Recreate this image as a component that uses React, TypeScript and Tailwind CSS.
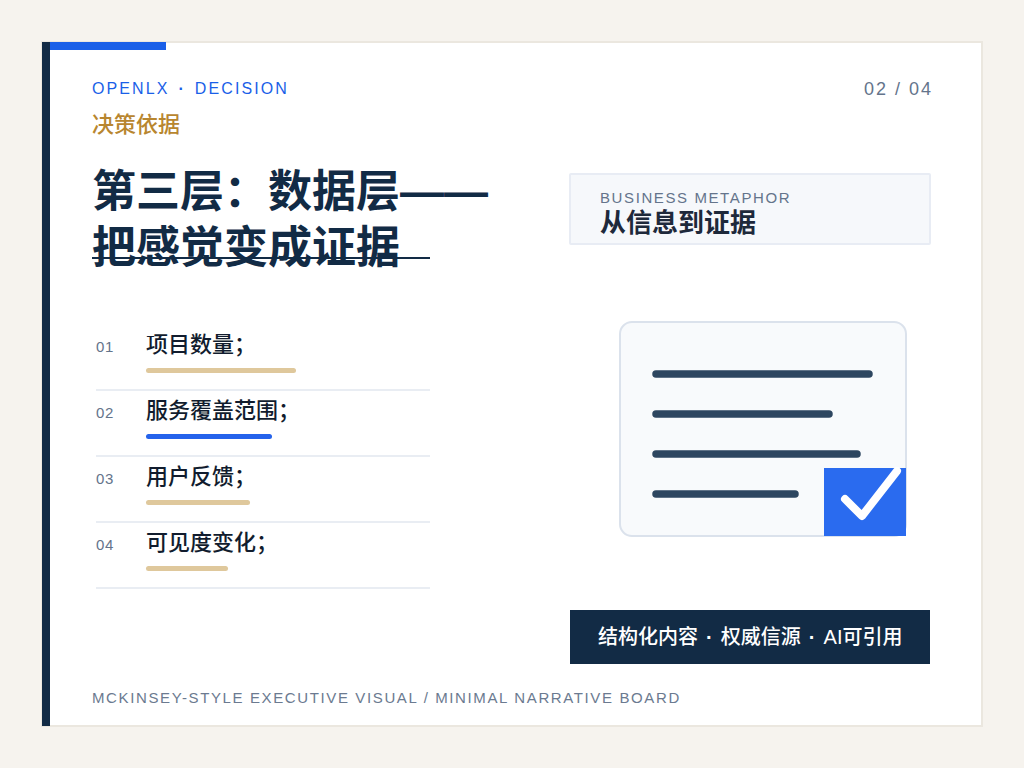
const items = [
  { num: "01", label: "项目数量", bar: "w-[150px] bg-[#dfc89c]" },
  { num: "02", label: "服务覆盖范围", bar: "w-[126px] bg-[#2563eb]" },
  { num: "03", label: "用户反馈", bar: "w-[104px] bg-[#dfc89c]" },
  { num: "04", label: "可见度变化", bar: "w-[82px] bg-[#dfc89c]" },
];

function EvidenceDoc() {
  return (
    <svg width="288" height="216" viewBox="0 0 288 216" className="ml-[49px] mt-[76px] block">
      <rect x="1" y="1" width="286" height="214" rx="12" fill="#f8fafc" stroke="#dbe2ec" strokeWidth="2" />
      <g stroke="#2d4660" strokeWidth="7.5" strokeLinecap="round">
        <line x1="37" y1="53" x2="250" y2="53" />
        <line x1="37" y1="93" x2="210" y2="93" />
        <line x1="37" y1="133" x2="238" y2="133" />
        <line x1="37" y1="173" x2="176" y2="173" />
      </g>
      <rect x="205" y="147" width="82" height="68" fill="#2a6bef" />
      <path d="M226 178L243 195L278 150" fill="none" stroke="#ffffff" strokeWidth="8" strokeLinecap="round" strokeLinejoin="round" />
    </svg>
  );
}

export default function App() {
  return (
    <div className="w-[1024px] h-[768px] bg-[#f6f3ee] p-[41px] font-['Liberation_Sans','Noto_Sans_CJK_SC',sans-serif] overflow-hidden">
      <div className="relative w-[942px] h-[686px] bg-white border-2 border-[#ebe7df] pl-[49px]">
        <div className="absolute -left-px -top-px w-2 h-[684px] bg-[#122b45]" />
        <div className="absolute left-[7px] -top-px w-[116px] h-2 bg-[#1a5fe8]" />

        <div className="flex justify-between pt-[36px] pr-[48px]">
          <span className="text-base/5 tracking-[0.13em] [word-spacing:2.5px] text-[#1a5fe8]">
            OPENLX <span className="font-bold">·</span> DECISION
          </span>
          <span className="text-lg/5 tracking-[0.11em] text-[#64748b]">02 / 04</span>
        </div>
        <div className="mt-3 text-[22px] leading-7 font-medium text-[#b8862f]">决策依据</div>

        <div className="flex mt-[23px]">
          <div className="w-[338px] shrink-0">
            <div className="relative pt-[2px] text-[44px] leading-[56px] font-bold text-[#122b45] whitespace-nowrap">
              <div>第三层{"\uFF1A"}数据层——</div>
              <div>把感觉变成证据</div>
              <div className="absolute left-0 top-[95px] w-[338px] h-[2px] bg-[#122b45]" />
            </div>

            <div className="mt-[49px] ml-1">
              {items.map((item) => (
                <div key={item.num} className="flex h-[66px] border-b-2 border-[#e9edf3]">
                  <span className="w-[50px] pt-[12px] text-[15px] leading-5 tracking-[0.05em] text-[#64748b]">{item.num}</span>
                  <div>
                    <div className="pt-[4px] text-[22px] leading-8 font-medium text-[#111c2e]">
                      {item.label}{"\uFF1B"}
                    </div>
                    <div className={`mt-[7px] h-[5px] rounded-full ${item.bar}`} />
                  </div>
                </div>
              ))}
            </div>
          </div>

          <div className="w-[360px] ml-[140px] pt-[11px]">
            <div className="-ml-px w-[362px] h-[72px] bg-[#f6f8fb] border-2 border-[#e8ecf4] rounded-[2px] pl-[29px] pt-[14px]">
              <div className="text-[15px] leading-[18px] tracking-[1.6px] text-[#64748b]">BUSINESS METAPHOR</div>
              <div className="text-[26px] leading-[32px] font-bold text-[#1e293b]">从信息到证据</div>
            </div>
            <EvidenceDoc />
            <div className="mt-[73px] h-[54px] bg-[#122b45] pl-[28px] flex items-center text-xl font-medium text-white whitespace-pre [word-spacing:2.5px]">
              <span>结构化内容 <span className="font-bold">·</span> 权威信源 <span className="font-bold">·</span> AI可引用</span>
            </div>
          </div>
        </div>

        <div className="mt-6 text-[15px] leading-5 tracking-[1.62px] text-[#6b7a90]">
          MCKINSEY-STYLE EXECUTIVE VISUAL / MINIMAL NARRATIVE BOARD
        </div>
      </div>
    </div>
  );
}
